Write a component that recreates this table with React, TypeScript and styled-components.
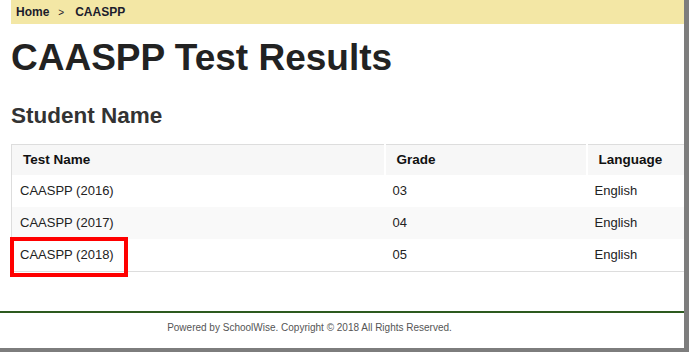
import styled, { createGlobalStyle } from "styled-components";

const GlobalStyle = createGlobalStyle`
  html, body {
    margin: 0;
    padding: 0;
    background: #7d7d7d;
    font-family: "Liberation Sans", Arial, sans-serif;
    overflow: hidden;
  }
`;

const Page = styled.div`
  width: 684px;
  height: 348px;
  background: #ffffff;
  display: flex;
  flex-direction: column;
  position: relative;
  overflow: hidden;
`;

const Content = styled.div`
  padding-left: 11px;
  height: 311px;
  flex: none;
`;

const Breadcrumb = styled.div`
  height: 24px;
  background: #f3e7a5;
  display: flex;
  align-items: center;
  padding-left: 5px;
  font-size: 12px;
  font-weight: bold;
  color: #1c1c2c;
`;

const Separator = styled.span`
  font-weight: normal;
  font-size: 10px;
  margin: 0 11px 0 9px;
`;

const Title = styled.h1`
  margin: 14px 0 0;
  font-size: 37px;
  line-height: 40px;
  font-weight: bold;
  color: #222222;
`;

const Subtitle = styled.h2`
  margin: 24px 0 0;
  font-size: 22.5px;
  line-height: 28px;
  font-weight: bold;
  color: #333333;
`;

const Table = styled.table`
  margin-top: 14px;
  width: 700px;
  table-layout: fixed;
  border-collapse: collapse;
  border-top: 1px solid #dddddd;
  border-bottom: 1px solid #dddddd;
  border-left: 1px solid #dddddd;
  font-size: 13px;
  color: #222222;
`;

const HeadCell = styled.th<{ width: number }>`
  width: ${({ width }) => width}px;
  height: 30px;
  padding: 0 0 0 11px;
  box-sizing: border-box;
  text-align: left;
  font-size: 13.5px;
  font-weight: bold;
  color: #111111;
  background: #f7f7f7;
  border-right: 2px solid #ffffff;
`;

const Row = styled.tr<{ $striped: boolean }>`
  background: ${({ $striped }) => ($striped ? "#f9f9f9" : "#ffffff")};
`;

const Cell = styled.td`
  height: 32px;
  padding: 0 0 0 8px;
`;

const Highlight = styled.div`
  position: absolute;
  left: 10px;
  top: 237px;
  width: 110px;
  height: 32px;
  border: 4px solid #ff0000;
`;

const Footer = styled.footer`
  border-top: 2px solid #2d5a1f;
  height: 28px;
  display: flex;
  align-items: center;
  justify-content: center;
  padding-right: 65px;
  font-size: 10px;
  color: #555555;
`;

const results = [
  { name: "CAASPP (2016)", grade: "03", language: "English" },
  { name: "CAASPP (2017)", grade: "04", language: "English" },
  { name: "CAASPP (2018)", grade: "05", language: "English" },
];

export default function App() {
  return (
    <>
      <GlobalStyle />
      <Page>
        <Content>
          <Breadcrumb>
            <span>Home</span>
            <Separator>&gt;</Separator>
            <span>CAASPP</span>
          </Breadcrumb>
          <Title>CAASPP Test Results</Title>
          <Subtitle>Student Name</Subtitle>
          <Table>
            <thead>
              <tr>
                <HeadCell width={373}>Test Name</HeadCell>
                <HeadCell width={202}>Grade</HeadCell>
                <HeadCell width={125}>Language</HeadCell>
              </tr>
            </thead>
            <tbody>
              {results.map((r, i) => (
                <Row key={r.name} $striped={i === 1}>
                  <Cell>{r.name}</Cell>
                  <Cell>{r.grade}</Cell>
                  <Cell>{r.language}</Cell>
                </Row>
              ))}
            </tbody>
          </Table>
        </Content>
        <Footer>Powered by SchoolWise. Copyright © 2018 All Rights Reserved.</Footer>
        <Highlight />
      </Page>
    </>
  );
}
